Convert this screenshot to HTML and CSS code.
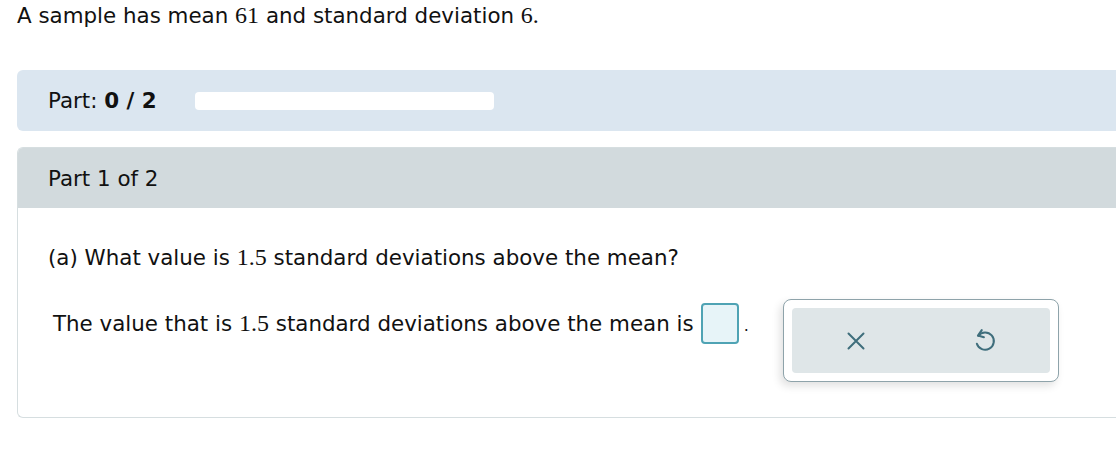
FILE: index.html
```html
<!DOCTYPE html>
<html lang="en">
<head>
  <meta charset="UTF-8">
  <title>Question</title>
  <link rel="stylesheet" href="styles.css">
</head>
<body>
  <div class="page">
    <p class="intro">A sample has mean <span class="math">61</span> and standard deviation <span class="math">6.</span></p>

    <div class="part-bar">
      <span class="part-label">Part: <b>0 / 2</b></span>
      <div class="progress"></div>
    </div>

    <div class="panel">
      <div class="panel-head">Part 1 of 2</div>
      <div class="panel-body">
        <p class="question">(a) What value is <span class="math">1.5</span> standard deviations above the mean?</p>
        <div class="answer-row">
          <span class="answer">The value that is <span class="math">1.5</span> standard deviations above the mean is</span>
          <span class="answer-box"></span>
          <span class="answer dot">.</span>
          <div class="tools">
            <div class="tools-inner">
              <button class="tool" title="Clear">
                <svg width="18" height="18" viewBox="0 0 18 18"><path d="M1.5 1.5 L16.5 16.5 M16.5 1.5 L1.5 16.5" stroke="#3f6e7c" stroke-width="2" fill="none" stroke-linecap="round"/></svg>
              </button>
              <button class="tool" title="Undo">
                <svg width="22" height="26" viewBox="0 0 20 24"><path d="M7 2 L3.5 7 L9 8.5" stroke="#3f6e7c" stroke-width="1.9" fill="none" stroke-linecap="round" stroke-linejoin="round"/><path d="M3.8 7.2 A8 8 0 1 1 2.5 14.5" stroke="#3f6e7c" stroke-width="1.9" fill="none" stroke-linecap="round"/></svg>
              </button>
            </div>
          </div>
        </div>
      </div>
    </div>
  </div>
</body>
</html>
```

FILE: styles.css
```css
body {
  margin: 0;
  font-family: "DejaVu Sans", Verdana, sans-serif;
  font-size: 21.4px;
  color: #111;
  background-color: #fff;
  overflow: hidden;
}

.page {
  width: 1120px;
  padding-left: 17px;
}

.math {
  font-family: "Liberation Serif", "Times New Roman", serif;
  font-size: 24px;
}

.intro {
  margin: 0;
  padding-top: 2px;
  line-height: 26px;
}

.part-bar {
  display: flex;
  align-items: center;
  margin-top: 41px;
  height: 61px;
  padding-left: 31px;
  background-color: #dbe6f0;
  border-radius: 6px 0 0 6px;
}

.part-label {
  width: 147px;
}

.progress {
  width: 299px;
  height: 18px;
  background-color: #fff;
  border-radius: 4px;
}

.panel {
  margin-top: 16px;
  border: 1px solid #d6dee0;
  border-right: none;
  border-radius: 6px 0 0 6px;
}

.panel-head {
  height: 60px;
  display: flex;
  align-items: center;
  padding-left: 30px;
  background-color: #d2dadd;
  border-radius: 5px 0 0 0;
}

.panel-body {
  padding: 36px 0 0 30px;
  height: 173px;
}

.question {
  margin: 0;
  line-height: 26px;
}

.answer-row {
  display: flex;
  align-items: flex-start;
  margin-top: 28px;
  padding-left: 5px;
}

.answer {
  margin-top: 4px;
  line-height: 41px;
}

.answer-box {
  width: 34px;
  height: 37px;
  margin-top: 4px;
  margin-left: 7px;
  border: 2px solid #4fa3b4;
  border-radius: 4px;
  background-color: #e7f4f8;
}

.dot {
  margin-left: 5px;
  font-size: 16px;
  padding-top: 2px;
}

.tools {
  margin-left: 34px;
  padding: 8px;
  border: 1px solid #8ea3aa;
  border-radius: 8px;
  background-color: #fff;
  box-shadow: -3px 4px 8px rgba(0, 0, 0, 0.12);
}

.tools-inner {
  display: flex;
  width: 258px;
  height: 65px;
  background-color: #dfe6e8;
  border-radius: 4px;
}

.tool {
  flex: 1;
  display: flex;
  align-items: center;
  justify-content: center;
  border: none;
  background: none;
  padding: 0;
  cursor: pointer;
}
```
